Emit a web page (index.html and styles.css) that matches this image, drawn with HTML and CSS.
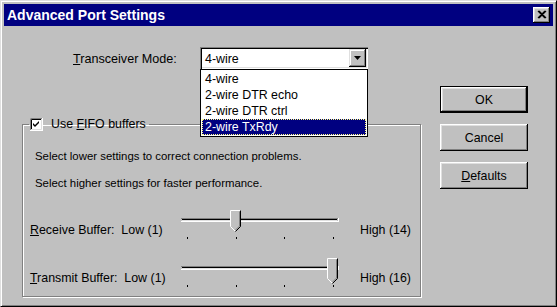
FILE: index.html
```html
<!DOCTYPE html>
<html>
<head>
<meta charset="utf-8">
<link rel="stylesheet" href="styles.css">
</head>
<body>
<div class="window">
  <div class="titlebar">
    <span class="title">Advanced Port Settings</span>
    <span class="close-btn">
      <svg width="16" height="14" viewBox="0 0 16 14">
        <path d="M4 3 L11 10 M5 3 L12 10 M11 3 L4 10 M12 3 L5 10" stroke="#000" stroke-width="1.2" fill="none"/>
      </svg>
    </span>
  </div>
  <div class="content">
    <div class="main">
      <div class="mode-row">
        <span class="mode-label"><u>T</u>ransceiver Mode:</span>
        <div class="combo">
          <span class="combo-text">4-wire</span>
          <span class="combo-arrow">
            <svg width="7" height="4" viewBox="0 0 7 4"><path d="M0 0 H7 L3.5 4 Z" fill="#000"/></svg>
          </span>
          <div class="combo-list">
            <div class="combo-item">4-wire</div>
            <div class="combo-item">2-wire DTR echo</div>
            <div class="combo-item">2-wire DTR ctrl</div>
            <div class="combo-item selected">2-wire TxRdy</div>
          </div>
        </div>
      </div>
      <fieldset class="group">
        <legend class="group-legend">
          <svg class="checkbox" width="13" height="13" viewBox="0 0 13 13">
            <rect x="0" y="0" width="13" height="13" fill="#fff"/>
            <path d="M0.5 12 V0.5 H12" stroke="#808080" fill="none"/>
            <path d="M1.5 11 V1.5 H11" stroke="#000" fill="none"/>
            <path d="M0 12.5 H12.5 V0" stroke="#fff" fill="none"/>
            <path d="M1 11.5 H11.5 V1" stroke="#dfdfdf" fill="none"/>
            <path d="M3 5 L5 7 L9 3 V5 L5 9 L3 7 Z" fill="#000"/>
          </svg>
          <span>Use <u>F</u>IFO buffers</span>
        </legend>
        <p class="hint first">Select lower settings to correct connection problems.</p>
        <p class="hint">Select higher settings for faster performance.</p>
        <div class="slider-row receive">
          <span class="slider-label"><u>R</u>eceive Buffer:&nbsp; Low (1)</span>
          <svg class="slider" width="170" height="36" viewBox="0 0 170 36">
            <path d="M6 12.5 H163" stroke="#808080"/>
            <path d="M7 13.5 H162" stroke="#000"/>
            <path d="M6 15.5 H164 M163.5 12 V16" stroke="#fff"/>
            <path d="M7 14.5 H162" stroke="#dfdfdf"/>
            <g fill="#000">
              <rect x="12" y="31" width="1" height="2"/>
              <rect x="61" y="31" width="1" height="2"/>
              <rect x="109" y="31" width="1" height="2"/>
              <rect x="158" y="31" width="1" height="2"/>
            </g>
            <g transform="translate(55.5 4.5)">
              <path d="M0 0 H10 V16 L5 21 L0 16 Z" fill="#c0c0c0"/>
              <path d="M0 16 V0 H10" stroke="#fff" fill="none"/>
              <path d="M10 0 V16 L5 21" stroke="#000" fill="none"/>
              <path d="M9 1 V15.5 L5 19.5" stroke="#808080" fill="none"/>
              <path d="M0 16 L4.5 20.5" stroke="#fff" fill="none"/>
            </g>
          </svg>
          <span class="slider-high">High (14)</span>
        </div>
        <div class="slider-row transmit">
          <span class="slider-label"><u>T</u>ransmit Buffer:&nbsp; Low (1)</span>
          <svg class="slider" width="170" height="36" viewBox="0 0 170 36">
            <path d="M6 12.5 H163" stroke="#808080"/>
            <path d="M7 13.5 H162" stroke="#000"/>
            <path d="M6 15.5 H164 M163.5 12 V16" stroke="#fff"/>
            <path d="M7 14.5 H162" stroke="#dfdfdf"/>
            <g fill="#000">
              <rect x="12" y="31" width="1" height="2"/>
              <rect x="61" y="31" width="1" height="2"/>
              <rect x="109" y="31" width="1" height="2"/>
              <rect x="158" y="31" width="1" height="2"/>
            </g>
            <g transform="translate(152.5 4.5)">
              <path d="M0 0 H10 V20 L5 25 L0 20 Z" fill="#c0c0c0"/>
              <path d="M0 20 V0 H10" stroke="#fff" fill="none"/>
              <path d="M10 0 V20 L5 25" stroke="#000" fill="none"/>
              <path d="M9 1 V19.5 L5 23.5" stroke="#808080" fill="none"/>
              <path d="M0 20 L4.5 24.5" stroke="#fff" fill="none"/>
            </g>
          </svg>
          <span class="slider-high">High (16)</span>
        </div>
      </fieldset>
    </div>
    <div class="buttons">
      <button class="btn default">OK</button>
      <button class="btn">Cancel</button>
      <button class="btn"><u>D</u>efaults</button>
    </div>
  </div>
</div>
</body>
</html>
```
FILE: styles.css
```css
* { box-sizing: border-box; }
html, body {
  margin: 0;
  padding: 0;
  background: #c0c0c0;
}
body {
  font-family: "Liberation Sans", Arial, sans-serif;
  font-size: 12px;
  color: #000;
}
.window {
  width: 557px;
  height: 307px;
  background: #c0c0c0;
  border-style: solid;
  border-width: 1px;
  border-color: #dfdfdf #000 #000 #dfdfdf;
  box-shadow: inset 1px 1px #fff, inset -1px -1px #808080;
  padding: 3px;
  overflow: hidden;
}
.titlebar {
  height: 22px;
  background: #000080;
  display: flex;
  align-items: center;
  justify-content: space-between;
  padding: 0 3px 0 3px;
}
.title {
  color: #fff;
  font-weight: bold;
  font-size: 14px;
}
.close-btn {
  width: 17px;
  height: 16px;
  background: #c0c0c0;
  box-shadow: inset -1px -1px #000, inset 1px 1px #fff, inset -2px -2px #808080, inset 2px 2px #dfdfdf;
  display: flex;
  align-items: center;
  justify-content: center;
}
.content {
  display: flex;
}
.main {
  width: 436px;
  padding-left: 18px;
}
.mode-row {
  display: flex;
  align-items: center;
  margin-top: 21px;
  padding-left: 51px;
}
.mode-label {
  width: 127px;
  padding-top: 2px;
  font-size: 12.6px;
}
.combo {
  position: relative;
  width: 168px;
  height: 22px;
  background: #fff;
  box-shadow: inset 1px 1px #808080, inset 2px 2px #000, inset -1px -1px #fff, inset -2px -2px #dfdfdf;
  display: flex;
  align-items: center;
  justify-content: space-between;
  padding: 2px 2px 2px 5px;
  font-size: 12.4px;
}
.combo-text {
  padding-top: 1px;
}
.combo-arrow {
  width: 17px;
  height: 18px;
  background: #c0c0c0;
  box-shadow: inset -1px -1px #000, inset 1px 1px #dfdfdf, inset -2px -2px #808080, inset 2px 2px #fff;
  display: flex;
  align-items: center;
  justify-content: center;
}
.combo-list {
  position: absolute;
  top: 22px;
  left: 0;
  width: 168px;
  background: #fff;
  border: 1px solid #000;
  padding: 1px;
  z-index: 2;
}
.combo-item {
  height: 16px;
  line-height: 16px;
  padding-left: 3px;
  white-space: nowrap;
}
.combo-item.selected {
  background: #000080;
  color: #fff;
  outline: 1px dotted #ffff80;
  outline-offset: -1px;
}
.group {
  margin: 48px 0 0 0;
  width: 399px;
  padding: 0 0 6px 0;
  border: 1px solid #808080;
  box-shadow: inset 1px 1px #fff, 1px 1px #fff;
  min-width: 0;
}
.group-legend {
  margin-left: 6px;
  padding: 0 3px 0 1px;
  display: flex;
  align-items: center;
  gap: 8px;
  height: 14px;
  font-size: 12.4px;
}
.checkbox {
  display: block;
}
.hint {
  margin: 0 0 0 12px;
  line-height: 14px;
  font-size: 11.4px;
}
.hint.first {
  margin-top: 18px;
}
.hint + .hint {
  margin-top: 13px;
}
.slider-row {
  display: flex;
  align-items: flex-start;
  height: 36px;
  padding-left: 7px;
  font-size: 12.4px;
}
.slider-row.receive {
  margin-top: 16px;
}
.slider-row.transmit {
  margin-top: 12px;
}
.slider-label {
  width: 145px;
  margin-top: 17px;
  line-height: 14px;
  white-space: nowrap;
}
.slider {
  display: block;
  flex: none;
}
.slider-high {
  margin-left: 15px;
  margin-top: 17px;
  line-height: 14px;
}
.buttons {
  margin-top: 60px;
  display: flex;
  flex-direction: column;
  gap: 11px;
}
.btn {
  width: 88px;
  height: 27px;
  font-family: "Liberation Sans", Arial, sans-serif;
  font-size: 12.4px;
  color: #000;
  background: #c0c0c0;
  border: none;
  padding: 0;
  box-shadow: inset -1px -1px #000, inset 1px 1px #fff, inset -2px -2px #808080, inset 2px 2px #dfdfdf;
}
.btn.default {
  border: 1px solid #000;
}
```
